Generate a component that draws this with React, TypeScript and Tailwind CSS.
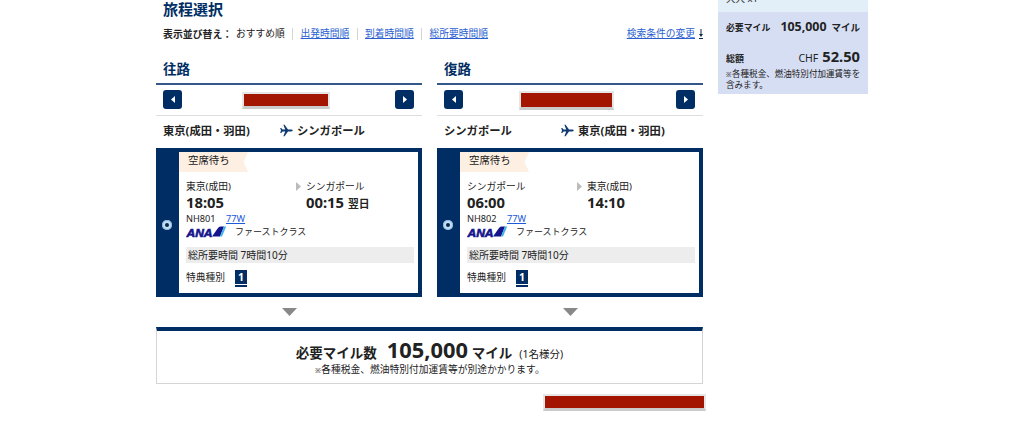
import clsx from 'clsx';

interface Flight {
  title: string;
  from: string;
  to: string;
  fromAirport: string;
  toAirport: string;
  departure: string;
  arrival: string;
  nextDay?: boolean;
  flightNo: string;
  dateWidth: string;
}

const flights: Flight[] = [
  {
    title: '往路',
    from: '東京(成田・羽田)',
    to: 'シンガポール',
    fromAirport: '東京(成田)',
    toAirport: 'シンガポール',
    departure: '18:05',
    arrival: '00:15',
    nextDay: true,
    flightNo: 'NH801',
    dateWidth: 'mt-[2px] ml-[60px] w-[88px] h-[17px]',
  },
  {
    title: '復路',
    from: 'シンガポール',
    to: '東京(成田・羽田)',
    fromAirport: 'シンガポール',
    toAirport: '東京(成田)',
    departure: '06:00',
    arrival: '14:10',
    flightNo: 'NH802',
    dateWidth: 'mt-[2px] ml-[56px] w-[95px] h-[19px]',
  },
];

const sortLinks = ['出発時間順', '到着時間順', '総所要時間順'];

const PlaneIcon = () => (
  <svg className="block h-[13px] w-[13px]" viewBox="0 0 13 13" fill="#0f3a72">
    <path d="M12.700 6.500c0-.6-.8-.9-1.600-.9H8L4.600.8H3.400l1.800 4.800H2.600L1.200 4.100H.2L1 6.500.2 8.900h1l1.400-1.500h2.600l-1.800 4.800h1.200L8 7.400h3.100c.8 0 1.600-.3 1.600-.9z" />
  </svg>
);

const AnaLogo = () => (
  <svg className="block h-[12px] w-[41px]" viewBox="0 0 41 12">
    <text
      x="0.500"
      y="10.500"
      textLength="26"
      lengthAdjust="spacingAndGlyphs"
      fill="#14148c"
      stroke="#14148c"
      strokeWidth="0.6"
      fontFamily="Liberation Sans, sans-serif"
      fontSize="11"
      fontWeight="bold"
      fontStyle="italic"
    >
      ANA
    </text>
    <path d="M26 10.500 32 2Q33.200.6 35 .6H38L34 10.500Z" fill="#14148c" />
    <path d="M34 10.500 38 .6H40.200L36 10.500Z" fill="#3cb4ee" />
  </svg>
);

const NavButton = ({ direction }: { direction: 'prev' | 'next' }) => (
  <button className="flex h-[19px] w-[19px] items-center justify-center rounded-[3px] bg-[#002e64]">
    <svg className={clsx('h-[7px] w-[4px]', direction === 'prev' && 'rotate-180')} viewBox="0 0 4 7" fill="#fff">
      <path d="M0 0 4 3.500 0 7Z" />
    </svg>
  </button>
);

const FlightColumn = ({ flight }: { flight: Flight }) => (
  <section className="w-[266px]">
    <h2 className="h-[29px] border-b-2 border-[#33578a] pl-[7px] text-[13.5px] leading-[26px] font-bold text-[#002e64]">
      {flight.title}
    </h2>

    {/* Date selector */}
    <div className="flex h-[31px] items-center border-b border-[#dedede] pr-[8px] pb-px pl-[7px]">
      <NavButton direction="prev" />
      <div className={clsx('border-2 border-b-[3px] border-[#e6e6e6] border-b-[#cbcbcb] bg-[#a31500]', flight.dateWidth)} />
      <div className="ml-auto">
        <NavButton direction="next" />
      </div>
    </div>

    {/* Route */}
    <div className="flex h-[33px] items-center pb-[4px] pl-[7px] text-[11.3px] leading-[20px] font-bold">
      <span className="w-[117px]">{flight.from}</span>
      <PlaneIcon />
      <span className="ml-[4px]">{flight.to}</span>
    </div>

    {/* Selected flight */}
    <div className="-mt-px flex h-[149px] border-4 border-l-0 border-[#002e64]">
      <div className="-my-px flex w-[23px] shrink-0 items-center justify-center bg-[#002e64]">
        <span className="mt-[4px] -ml-px flex h-[10px] w-[10px] items-center justify-center rounded-full bg-[#bfe0f6] ring-1 ring-[#8fb6dc] ring-inset">
          <span className="h-[4px] w-[4px] rounded-full bg-[#0b2748]" />
        </span>
      </div>
      <div className="min-w-0 flex-1">
        <div className="relative h-[20px] w-[69px]">
          <svg className="absolute inset-0 h-full w-full" viewBox="0 0 69 20">
            <path d="M0 0H69L64.500 10 69 20H0Z" fill="#fdefe1" />
          </svg>
          <span className="relative block pl-[9px] text-[10.4px] leading-[17px]">空席待ち</span>
        </div>

        <div className="pl-[8px]">
          <div className="mt-[7px] flex">
            <div className="w-[109px] -ml-px mr-px">
              <p className="h-[15px] text-[9.75px] leading-[15px]">{flight.fromAirport}</p>
              <p className="h-[17px] text-[14.8px] leading-[16px] font-bold">{flight.departure}</p>
            </div>
            <svg className="mt-[3px] h-[9px] w-[5px]" viewBox="0 0 5 9" fill="#bbb">
              <path d="M0 0 5 4.500 0 9Z" />
            </svg>
            <div className="ml-[5px]">
              <p className="h-[15px] text-[9.75px] leading-[15px]">{flight.toAirport}</p>
              <p className="flex h-[17px] items-baseline text-[14.8px] leading-[16px] font-bold">
                {flight.arrival}
                {flight.nextDay && <span className="ml-[4px] text-[10.8px]">翌日</span>}
              </p>
            </div>
          </div>

          <div className="-ml-px flex h-[15px] text-[9.2px] leading-[15px]">
            <span className="w-[40px]">{flight.flightNo}</span>
            <a className="text-[#1a5adb] underline">77W</a>
          </div>
          <div className="-ml-px flex h-[12px] items-center">
            <AnaLogo />
            <span className="ml-[8px] text-[9px] leading-[12px]">ファーストクラス</span>
          </div>

          <div className="mt-[9px] mr-[4px] -ml-px h-[16px] bg-[#ededed] pl-[2px] text-[10px] leading-[16px]">
            総所要時間 7時間10分
          </div>

          <div className="mt-[8px] -ml-px flex">
            <span className="w-[49px] text-[9.75px] leading-[14px]">特典種別</span>
            <span className="-mt-px h-[17px] w-[12px] border-b-2 border-[#002e64]">
              <span className="block h-[14px] bg-[#002e64] text-center text-[10.5px] leading-[14px] font-bold text-white">1</span>
            </span>
          </div>
        </div>
      </div>
    </div>

    <svg className="mx-auto mt-[11px] block h-[8px] w-[15px]" viewBox="0 0 15 8" fill="#888">
      <path d="M0 0H15L7.500 8Z" />
    </svg>
  </section>
);

const Sidebar = () => (
  <aside className="ml-[15px] h-[95px] w-[150px] text-[#222]">
    <div className="h-[12px] overflow-hidden bg-[#e2eef8] pl-[8px]">
      <p className="-mt-[9px] text-[9.5px] leading-[16px]">大人 x1</p>
    </div>
    <div className="h-[82px] bg-[#d6def4] px-[8px]">
      <div className="flex h-[29px] items-baseline justify-between pt-[6px] font-bold">
        <span className="text-[8.9px] leading-[18px]">必要マイル</span>
        <span className="text-[12.4px] leading-[18px]">
          105,000<span className="ml-[5px] text-[9.5px]">マイル</span>
        </span>
      </div>
      <div className="flex h-[28px] items-baseline justify-between pt-[5px]">
        <span className="text-[9px] leading-[20px] font-bold">総額</span>
        <span className="text-[10.5px] leading-[20px]">
          CHF<span className="ml-[4px] text-[14.7px] font-bold">52.50</span>
        </span>
      </div>
      <p className="text-[8.55px] leading-[11px] whitespace-nowrap">
        <span className="inline-block w-[6px] text-[6.5px]">※</span>各種税金、燃油特別付加運賃等を
        <br />
        含みます。
      </p>
    </div>
  </aside>
);

export default function App() {
  return (
    <div className="flex h-[440px] w-[1024px] items-start overflow-hidden bg-white pl-[156px] font-['Noto_Sans','Noto_Sans_CJK_JP',sans-serif] text-[#222]">
      <main className="w-[547px]">
        <h1 className="h-[23px] pl-[7px] text-[15px] leading-[19px] font-bold text-[#002e64]">旅程選択</h1>

        {/* Sort order */}
        <div className="flex h-[20px] items-center pt-px pl-[7px] text-[9.75px] leading-[20px]">
          <span className="w-[73px] text-[9.9px] font-bold">表示並び替え：</span>
          <span>おすすめ順</span>
          {sortLinks.map((label) => (
            <span key={label} className="flex items-center">
              <span className="mx-[7.400px] h-[12px] w-px bg-[#d5d5d5]" />
              <a className="text-[#2b5fd0] underline">{label}</a>
            </span>
          ))}
          <a className="ml-auto text-[#2b5fd0] underline">検索条件の変更</a>
          <svg className="ml-[4px] h-[10px] w-[4px]" viewBox="0 0 4 10" fill="#0b2748">
            <path d="M1.500 0h1v5H4L2 8 0 5h1.500zM0 9h4v1H0z" />
          </svg>
        </div>

        <div className="mt-[13px] flex justify-between">
          {flights.map((flight) => (
            <FlightColumn key={flight.title} flight={flight} />
          ))}
        </div>

        {/* Total miles */}
        <div className="mt-[11px] h-[57px] border border-t-4 border-[#d5d5d5] border-t-[#002e64] text-center">
          <div className="mt-[7px] flex h-[25px] items-baseline justify-center text-[13.5px] leading-[26px] font-bold">
            <span>必要マイル数</span>
            <span className="mr-[4px] ml-[10px] text-[21.8px] leading-[24px]">105,000</span>
            <span>マイル</span>
            <span className="ml-[7px] text-[10.5px] leading-[20px] font-normal">(1名様分)</span>
          </div>
          <p className="text-[9.75px] leading-[14px]">
            <span className="inline-block w-[7px] text-[7px]">※</span>各種税金、燃油特別付加運賃等が別途かかります。
          </p>
        </div>

        <div className="mt-[10px] -mr-[3px] ml-auto h-[17px] w-[163px] border-2 border-b-[3px] border-[#e6e6e6] border-b-[#cbcbcb] bg-[#a31500]" />
      </main>

      <Sidebar />
    </div>
  );
}
